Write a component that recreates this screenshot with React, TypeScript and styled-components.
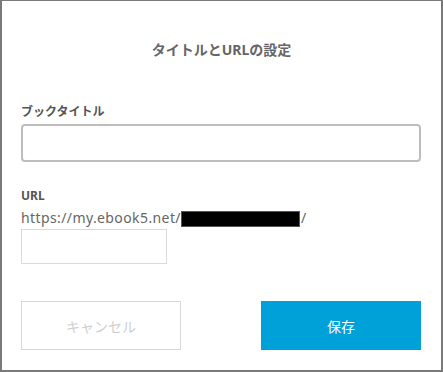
import React from "react";
import styled, { createGlobalStyle } from "styled-components";

const Global = createGlobalStyle`
  html, body { margin: 0; padding: 0; background: #fff; }
  * { box-sizing: border-box; }
  body { font-family: "Noto Sans", "Noto Sans CJK JP", sans-serif; }
`;

const Dialog = styled.div`
  width: 443px;
  height: 372px;
  border: 2px solid #7a7a7a;
  border-top-width: 1px;
  background: #fff;
  padding: 39px 20px 0 19px;
  display: flex;
  flex-direction: column;
`;

const Title = styled.h1`
  margin: 0;
  font-size: 14px;
  line-height: 20px;
  font-weight: 700;
  color: #666;
  text-align: center;
  padding-left: 1px;
`;

const Label = styled.label<{ $gap: number }>`
  display: block;
  margin-top: ${(p) => p.$gap}px;
  font-size: 12px;
  line-height: 16px;
  font-weight: 700;
  color: #555;
`;

const TitleInput = styled.input`
  margin-top: 4px;
  width: 400px;
  height: 38px;
  border: 2px solid #bdbdbd;
  border-radius: 4px;
  outline: none;
  font: inherit;
  padding: 0 8px;
`;

const UrlLine = styled.div`
  margin-top: 4px;
  display: flex;
  align-items: center;
  font-size: 14px;
  line-height: 20px;
  letter-spacing: 0.4px;
  color: #666;
`;

const Redacted = styled.span`
  display: inline-block;
  width: 119px;
  height: 16px;
  margin: 2px 1px 0 0;
  background: #000;
  border: 1px solid #555;
`;

const SlugInput = styled.input`
  margin-top: 1px;
  width: 146px;
  height: 35px;
  border: 1px solid #dadada;
  border-radius: 0;
  outline: none;
  font: inherit;
  padding: 0 6px;
`;

const Actions = styled.div`
  margin-top: 37px;
  display: flex;
  justify-content: space-between;
`;

const Button = styled.button<{ $primary?: boolean }>`
  width: 160px;
  height: 49px;
  font-family: "Noto Sans CJK JP", sans-serif;
  font-size: 14px;
  cursor: pointer;
  border: ${(p) => (p.$primary ? "none" : "1px solid #d8d8d8")};
  background: ${(p) => (p.$primary ? "#00a0d8" : "#fff")};
  color: ${(p) => (p.$primary ? "#fff" : "#cfcfcf")};
  border-radius: 0;
`;

export default function App() {
  return (
    <>
      <Global />
      <Dialog>
        <Title>タイトルとURLの設定</Title>
        <Label $gap={44}>ブックタイトル</Label>
        <TitleInput type="text" />
        <Label $gap={26}>URL</Label>
        <UrlLine>
          https://my.ebook5.net/
          <Redacted />/
        </UrlLine>
        <SlugInput type="text" />
        <Actions>
          <Button>キャンセル</Button>
          <Button $primary>保存</Button>
        </Actions>
      </Dialog>
    </>
  );
}
